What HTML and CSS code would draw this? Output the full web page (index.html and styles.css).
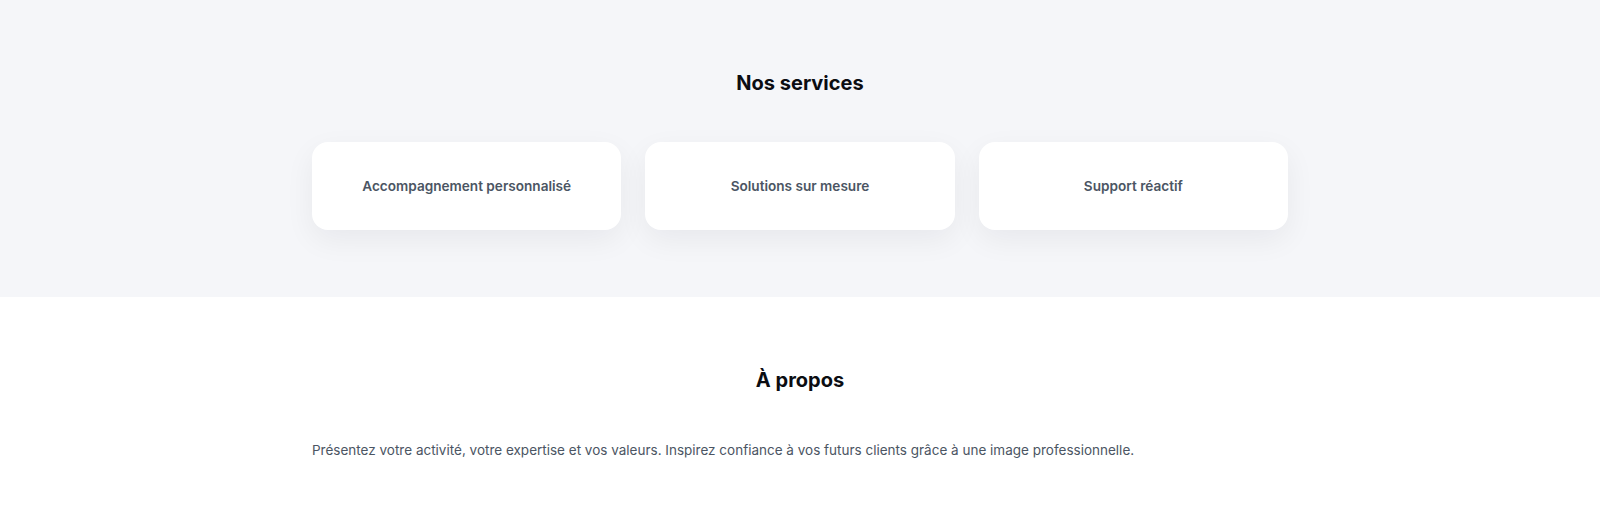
FILE: index.html
```html
<!DOCTYPE html>
<html lang="fr">
<head>
    <meta charset="UTF-8">
    <meta name="viewport" content="width=device-width, initial-scale=1.0">
    <title>Nos services</title>
    <link rel="stylesheet" href="styles.css">
</head>
<body>
    <section class="section services">
        <div class="container">
            <h2>Nos services</h2>
            <div class="cards">
                <div class="card">Accompagnement personnalisé</div>
                <div class="card">Solutions sur mesure</div>
                <div class="card">Support réactif</div>
            </div>
        </div>
    </section>

    <section class="section about">
        <div class="container">
            <h2>À propos</h2>
            <p>Présentez votre activité, votre expertise et vos valeurs. Inspirez confiance à vos futurs clients grâce à une image professionnelle.</p>
        </div>
    </section>
</body>
</html>
```

FILE: styles.css
```css
body {
    font-family: Inter, "Noto Sans", Arial, sans-serif;
    margin: 0;
    background: #ffffff;
    color: #111827;
}
.container {
    max-width: 976px;
    margin: 0 auto;
}
.section {
    padding: 69px 0 67px;
}
.services {
    background-color: #f5f6f9;
}
h2 {
    text-align: center;
    font-size: 20px;
    line-height: 28px;
    font-weight: 700;
    color: #0b0d12;
    margin: 0 0 45px;
}
.cards {
    display: grid;
    grid-template-columns: repeat(3, 1fr);
    gap: 24px;
}
.card {
    background: white;
    border-radius: 16px;
    padding: 32px 16px;
    text-align: center;
    font-size: 13.6px;
    line-height: 24px;
    font-weight: 600;
    color: #4b5563;
    box-shadow: 0 10px 30px rgba(15, 23, 42, 0.06);
}
.about h2 {
    margin-bottom: 44px;
}
.about p {
    margin: 0;
    font-size: 13.5px;
    line-height: 24px;
    color: #4b5563;
}
```
